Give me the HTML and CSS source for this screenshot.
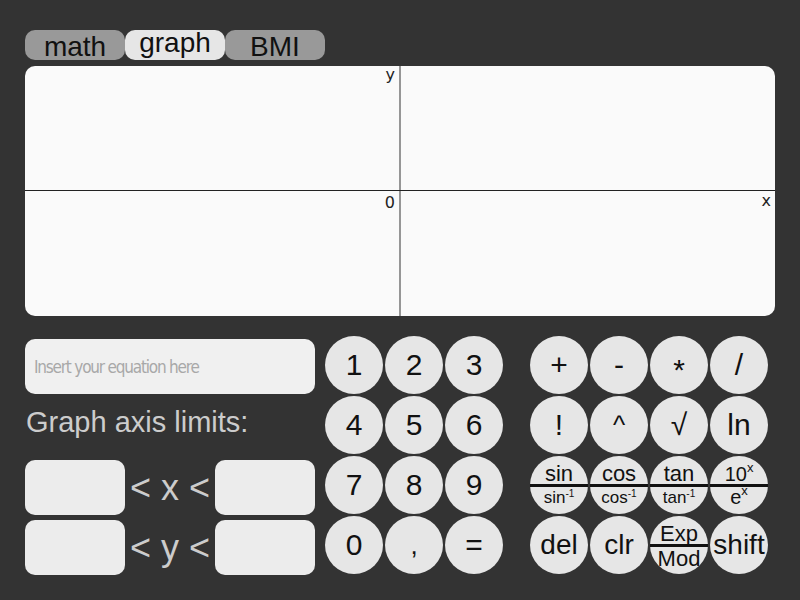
FILE: index.html
```html
<!DOCTYPE html>
<html>
<head>
<meta charset="utf-8">
<link rel="stylesheet" href="styles.css">
</head>
<body>
<div class="app">
  <div class="tabs">
    <div class="tab">math</div>
    <div class="tab active">graph</div>
    <div class="tab">BMI</div>
  </div>
  <div class="graph">
    <svg class="plot" width="750" height="250" viewBox="0 0 750 250">
      <line x1="375" y1="0" x2="375" y2="250" stroke="#333" stroke-width="1"/>
      <line x1="0" y1="124.5" x2="750" y2="124.5" stroke="#222" stroke-width="1"/>
      <text x="370" y="14" text-anchor="end" class="lbl">y</text>
      <text x="370" y="142" text-anchor="end" class="lbl">0</text>
      <text x="746" y="140" text-anchor="end" class="lbl">x</text>
    </svg>
  </div>
  <div class="panel">
    <div class="left">
      <input class="equation" type="text" placeholder="Insert your equation here">
      <div class="limits-title">Graph axis limits:</div>
      <div class="limit-row">
        <input class="limit" type="text">
        <span class="rel">&lt; x &lt;</span>
        <input class="limit" type="text">
      </div>
      <div class="limit-row">
        <input class="limit" type="text">
        <span class="rel">&lt; y &lt;</span>
        <input class="limit" type="text">
      </div>
    </div>
    <div class="numpad">
      <div class="key">1</div><div class="key">2</div><div class="key">3</div>
      <div class="key">4</div><div class="key">5</div><div class="key">6</div>
      <div class="key">7</div><div class="key">8</div><div class="key">9</div>
      <div class="key">0</div><div class="key comma">,</div><div class="key">=</div>
    </div>
    <div class="ops">
      <div class="key">+</div><div class="key minus">-</div><div class="key star">*</div><div class="key">/</div>
      <div class="key">!</div><div class="key caret">^</div><div class="key">√</div><div class="key">ln</div>
      <div class="key split">
        <div class="top">sin</div><div class="bar"></div><div class="bot">sin<sup>-1</sup></div>
      </div>
      <div class="key split">
        <div class="top">cos</div><div class="bar"></div><div class="bot">cos<sup>-1</sup></div>
      </div>
      <div class="key split">
        <div class="top">tan</div><div class="bar"></div><div class="bot">tan<sup>-1</sup></div>
      </div>
      <div class="key split">
        <div class="top ten">10<sup class="sx">x</sup></div><div class="bar"></div><div class="bot e">e<sup class="sx">x</sup></div>
      </div>
      <div class="key word">del</div>
      <div class="key word">clr</div>
      <div class="key split">
        <div class="top">Exp</div><div class="bar"></div><div class="bot mod">Mod</div>
      </div>
      <div class="key word">shift</div>
    </div>
  </div>
</div>
</body>
</html>
```

FILE: styles.css
```css
html, body {
  margin: 0;
  padding: 0;
  background: #333333;
  width: 800px;
  height: 600px;
  overflow: hidden;
}

.app {
  padding: 30px 25px 0 25px;
  font-family: "Liberation Sans", Arial, sans-serif;
}

.tabs {
  display: flex;
}

.tab {
  box-sizing: border-box;
  width: 100px;
  height: 30px;
  padding-top: 2px;
  border-radius: 10px;
  background: #999999;
  color: #111;
  font-size: 28px;
  line-height: 30px;
  text-align: center;
  overflow: visible;
}

.tab.active {
  background: #e6e6e6;
  padding-top: 0;
  line-height: 26px;
}

.graph {
  margin-top: 6px;
  width: 750px;
  height: 250px;
  background: #fafafa;
  border-radius: 10px;
  overflow: hidden;
}

.plot {
  display: block;
}

.lbl {
  font-family: "DejaVu Sans", sans-serif;
  font-size: 16px;
  fill: #222;
}

.panel {
  margin-top: 20px;
  display: flex;
  align-items: flex-start;
}

.left {
  width: 290px;
  padding-top: 3px;
}

.equation {
  box-sizing: border-box;
  display: block;
  width: 290px;
  height: 55px;
  border: none;
  border-radius: 10px;
  background: #f0f0f0;
  padding: 0 9px;
  font-family: "DejaVu Sans Condensed", "DejaVu Sans", sans-serif;
  font-stretch: condensed;
  font-size: 17px;
  letter-spacing: -1.2px;
  color: #222;
  outline: none;
}

.equation::placeholder {
  color: #a8a8a8;
}

.limits-title {
  margin-top: 12px;
  padding-left: 1px;
  font-size: 29px;
  line-height: 32px;
  color: #cccccc;
}

.limit-row {
  display: flex;
  align-items: center;
  height: 55px;
  margin-top: 22px;
}

.limit-row + .limit-row {
  margin-top: 5px;
}

.limit {
  box-sizing: border-box;
  width: 100px;
  height: 55px;
  border: none;
  border-radius: 10px;
  background: #ececec;
  outline: none;
  font-family: "Liberation Sans", sans-serif;
  font-size: 20px;
  padding: 0 8px;
}

.rel {
  flex: 1;
  text-align: center;
  font-size: 36px;
  color: #cccccc;
  white-space: nowrap;
}

.numpad {
  margin-left: 10px;
  display: grid;
  grid-template-columns: repeat(3, 58px);
  grid-auto-rows: 58px;
  gap: 2px;
}

.ops {
  margin-left: 27px;
  display: grid;
  grid-template-columns: repeat(4, 58px);
  grid-auto-rows: 58px;
  gap: 2px;
}

.key {
  width: 58px;
  height: 58px;
  border-radius: 50%;
  background: #e6e6e6;
  color: #111;
  font-size: 30px;
  display: flex;
  align-items: center;
  justify-content: center;
  overflow: hidden;
}

.key.comma {
  font-size: 26px;
}

.key.star {
  padding-top: 10px;
  box-sizing: border-box;
}

.key.caret {
  font-size: 26px;
}

.key.word {
  font-size: 28px;
}

.key.split {
  display: block;
  text-align: center;
  overflow: visible;
}

.split .top {
  height: 28px;
  font-size: 22px;
  line-height: 36px;
  overflow: visible;
}

.split .bar {
  height: 3px;
  background: #111;
}

.split .bot {
  font-size: 17px;
  line-height: 21px;
}

.split sup {
  font-size: 10px;
  vertical-align: 6px;
  line-height: 0;
}

.split .top.ten {
  font-size: 20px;
}

.split .sx {
  font-size: 13px;
  vertical-align: 9px;
}

.split .bot.e {
  font-size: 20px;
  line-height: 21px;
}

.split .bot.mod {
  font-size: 22px;
  line-height: 24px;
}
```
